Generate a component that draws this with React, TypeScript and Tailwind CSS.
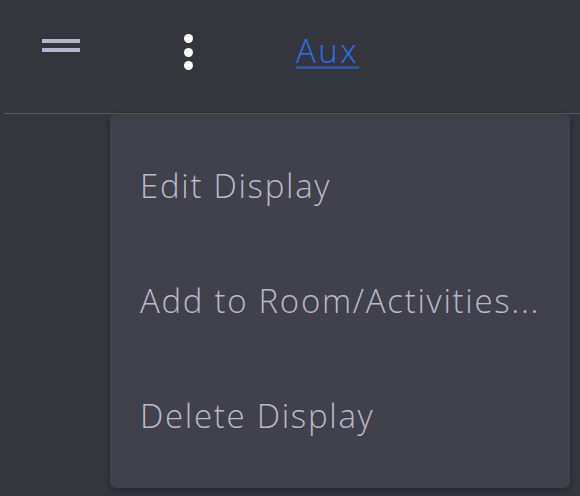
import React from "react";

export default function App() {
  const font = { fontFamily: "'Open Sans', 'Noto Sans', sans-serif" };
  return (
    <div className="relative w-[580px] h-[496px] bg-[#35353e] overflow-hidden" style={font}>
      <div className="ml-[4px] h-[114px] border-b border-[#58585f] flex items-start">
        <div className="mt-[39px] ml-[38px] w-[38px] flex flex-col gap-[5px]">
          <div className="h-[4px] bg-[#b7b5cb]" />
          <div className="h-[4px] bg-[#b7b5cb]" />
        </div>
        <div className="mt-[34px] ml-[104px] w-[9px] flex flex-col gap-[4.5px]">
          <div className="w-[9px] h-[9px] rounded-full bg-white" />
          <div className="w-[9px] h-[9px] rounded-full bg-white" />
          <div className="w-[9px] h-[9px] rounded-full bg-white" />
        </div>
        <a
          href="#"
          className="ml-[103px] mt-[29px] text-[33px] font-light tracking-[2.5px] leading-[44px] text-[#2d6ff0] underline decoration-[#30579c] decoration-[3px] underline-offset-[3px]"
        >
          Aux
        </a>
      </div>
      <div className="absolute left-[110px] top-[114px] w-[460px] h-[374px] bg-[#41414b] rounded-[6px] shadow-[0_2px_6px_rgba(0,0,0,0.35)] py-[14px] flex flex-col">
        {["Edit Display", "Add to Room/Activities...", "Delete Display"].map((t) => (
          <div key={t} className="h-[115px] flex items-center pl-[30px] text-[33px] font-light tracking-[1.7px] text-[#b9b8cc]">
            {t}
          </div>
        ))}
      </div>
    </div>
  );
}
